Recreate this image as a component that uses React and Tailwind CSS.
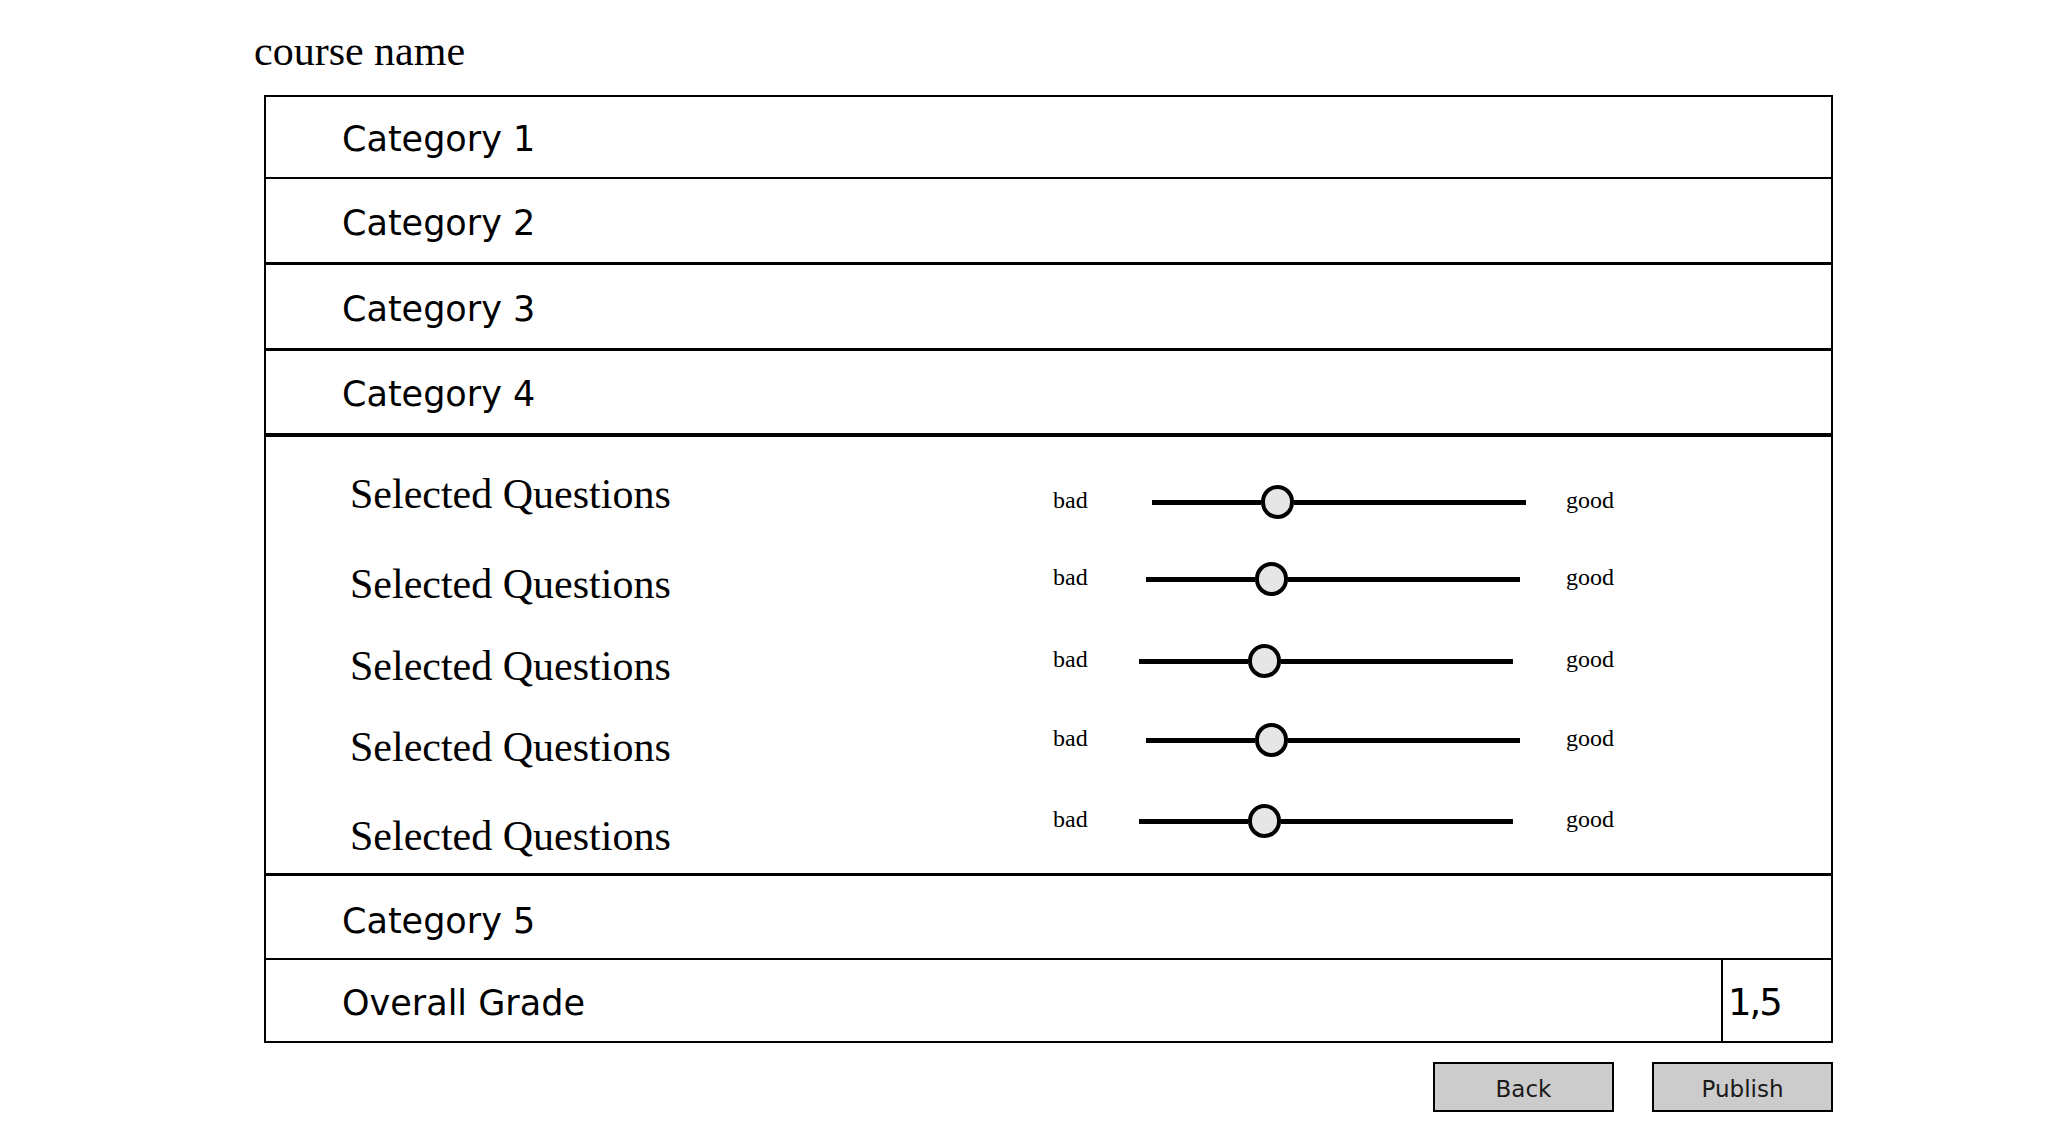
import React from 'react';

const CATEGORIES_TOP = [
  { label: 'Category 1', className: 'h-[80px] pt-[5px]' },
  { label: 'Category 2', className: 'h-[85px] border-t-2 pt-[5px]' },
  { label: 'Category 3', className: 'h-[86px] border-t-[3px] pt-[5px]' },
  { label: 'Category 4', className: 'h-[85px] border-t-[3px] pt-[5px]' },
];

// each row: its height, a nudge for the question text and where the slider line starts
const QUESTIONS = [
  { row: 'h-[80px]', text: 'pb-[16px]', slider: 'ml-[13px]' },
  { row: 'h-[74px]', text: 'pt-[10px]', slider: 'ml-[7px]' },
  { row: 'h-[90px]', text: 'pt-[10px]', slider: 'ml-0' },
  { row: 'h-[68px]', text: 'pt-[14px]', slider: 'ml-[7px]' },
  { row: 'h-[94px]', text: 'pt-[30px]', slider: 'ml-0' },
];

const sketch = { fontFamily: '"DejaVu Sans", "Noto Sans", sans-serif' };
const serif = { fontFamily: '"Liberation Serif", "DejaVu Serif", serif' };

function CategoryRow({ label, className }) {
  return (
    <div className={`flex items-center border-black pl-[76px] ${className}`}>
      <span className="text-[35px] leading-none text-black" style={sketch}>
        {label}
      </span>
    </div>
  );
}

function Slider({ offset }) {
  return (
    <div className={`flex h-[34px] w-[374px] items-center ${offset}`}>
      <div className="h-[5px] w-[109px] bg-black" />
      <div className="h-[34px] w-[33px] shrink-0 rounded-full border-[4px] border-black bg-[#e6e6e6]" />
      <div className="h-[5px] flex-1 bg-black" />
    </div>
  );
}

function QuestionRow({ q }) {
  return (
    <div className={`flex items-center pl-[84px] ${q.row}`}>
      <p className={`w-[703px] text-[42px] leading-[48px] text-black ${q.text}`} style={serif}>
        Selected Questions
      </p>
      <span className="w-[86px] pb-[4px] text-[24px] leading-none text-black" style={serif}>
        bad
      </span>
      <div className="w-[427px]">
        <Slider offset={q.slider} />
      </div>
      <span className="pb-[4px] text-[24px] leading-none text-black" style={serif}>
        good
      </span>
    </div>
  );
}

export default function App() {
  return (
    <div className="min-h-[1126px] w-full bg-white">
      <div className="ml-[254px] w-[1579px]">
        <h1 className="pt-[27px] text-[42px] font-normal leading-[48px] text-black" style={serif}>
          course name
        </h1>

        <div className="ml-[10px] mt-[20px] w-[1569px] border-2 border-black">
          {CATEGORIES_TOP.map((c) => (
            <CategoryRow key={c.label} {...c} />
          ))}

          <div className="border-t-4 border-black pb-[5px] pt-[25px]">
            {QUESTIONS.map((q, i) => (
              <QuestionRow key={i} q={q} />
            ))}
          </div>

          <CategoryRow label="Category 5" className="h-[85px] border-t-[3px] pt-[8px]" />

          <div className="flex h-[83px] border-t-2 border-black">
            <div className="flex flex-1 items-center pl-[76px] pt-[6px]">
              <span className="text-[35px] leading-none text-black" style={sketch}>
                Overall Grade
              </span>
            </div>
            <div className="flex w-[110px] items-center border-l-2 border-black pl-[5px] pt-[4px]">
              <span className="text-[37px] leading-none tracking-[-2px] text-black" style={sketch}>
                1,5
              </span>
            </div>
          </div>
        </div>

        <div className="mt-[19px] flex justify-end gap-[38px]">
          <button
            type="button"
            className="flex h-[50px] w-[181px] items-center justify-center border-2 border-black bg-[#cccccc] pt-[4px] text-[23px] text-[#1a1a1a]"
            style={sketch}
          >
            Back
          </button>
          <button
            type="button"
            className="flex h-[50px] w-[181px] items-center justify-center border-2 border-black bg-[#cccccc] pt-[4px] text-[23px] text-[#1a1a1a]"
            style={sketch}
          >
            Publish
          </button>
        </div>
      </div>
    </div>
  );
}
